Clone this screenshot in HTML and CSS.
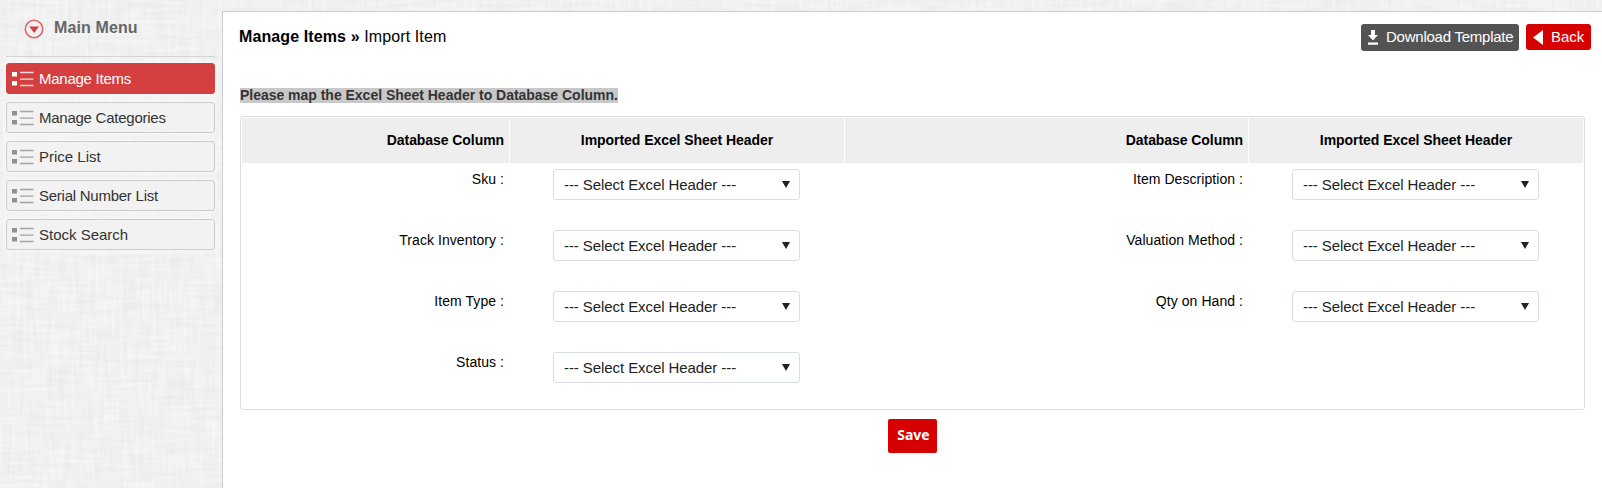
FILE: index.html
```html
<!DOCTYPE html>
<html lang="en">
<head>
<meta charset="utf-8">
<title>Import Item</title>
<link rel="stylesheet" href="styles.css">
</head>
<body>
<svg class="linen">
  <filter id="weft" x="0" y="0" width="100%" height="100%">
    <feTurbulence type="fractalNoise" baseFrequency=".025 .25" numOctaves="2" seed="3"/>
    <feColorMatrix values="0 0 0 0 0  0 0 0 0 0  0 0 0 0 0  .05 0 0 0 -.01"/>
  </filter>
  <filter id="warp" x="0" y="0" width="100%" height="100%">
    <feTurbulence type="fractalNoise" baseFrequency=".25 .025" numOctaves="2" seed="8"/>
    <feColorMatrix values="0 0 0 0 0  0 0 0 0 0  0 0 0 0 0  .05 0 0 0 -.01"/>
  </filter>
  <rect width="100%" height="100%" filter="url(#weft)"/>
  <rect width="100%" height="100%" filter="url(#warp)"/>
</svg>
<svg class="sprite" width="0" height="0">
  <symbol id="list" viewBox="0 0 22 16">
    <path class="squares" d="M0 1h5v4.400H0zM0 10h5v4.400H0z"/>
    <path class="lines" d="M8 1.500h13.500M8 8.200h13.500M8 14.500h13.500"/>
  </symbol>
</svg>
<div class="page">
  <aside class="sidebar">
    <h2 class="menu-title">
      <svg class="menu-icon" viewBox="0 0 20 20"><circle cx="10" cy="10" r="8.700"/><path d="M5.200 7.500h9.800L10.200 14z"/></svg>
      <span>Main Menu</span>
    </h2>
    <nav class="menu">
      <a class="item tight active"><svg><use href="#list"/></svg>Manage Items</a>
      <a class="item tight"><svg><use href="#list"/></svg>Manage Categories</a>
      <a class="item"><svg><use href="#list"/></svg>Price List</a>
      <a class="item tight"><svg><use href="#list"/></svg>Serial Number List</a>
      <a class="item"><svg><use href="#list"/></svg>Stock Search</a>
    </nav>
  </aside>
  <main class="content">
    <header class="topbar">
      <h1 class="crumbs"><b>Manage Items »</b> Import Item</h1>
      <div class="actions">
        <a class="btn download"><svg viewBox="0 0 10 15"><path d="M3 0h4v5h3L5 10.500 0 5h3zM0 12.500h10v2.200H0z"/></svg>Download Template</a>
        <a class="btn back"><svg viewBox="0 0 10 15"><path d="M10 0v15L0 7.500z"/></svg>Back</a>
      </div>
    </header>
    <p class="notice"><span>Please map the Excel Sheet Header to Database Column.</span></p>
    <section class="mapping">
      <div class="row head">
        <div class="name">Database Column</div><div class="pick">Imported Excel Sheet Header</div>
        <div class="name">Database Column</div><div class="pick">Imported Excel Sheet Header</div>
      </div>
      <div class="row">
        <div class="name">Sku :</div><div class="pick"><div class="select">--- Select Excel Header ---<i></i></div></div>
        <div class="name">Item Description :</div><div class="pick"><div class="select">--- Select Excel Header ---<i></i></div></div>
      </div>
      <div class="row">
        <div class="name">Track Inventory :</div><div class="pick"><div class="select">--- Select Excel Header ---<i></i></div></div>
        <div class="name">Valuation Method :</div><div class="pick"><div class="select">--- Select Excel Header ---<i></i></div></div>
      </div>
      <div class="row">
        <div class="name">Item Type :</div><div class="pick"><div class="select">--- Select Excel Header ---<i></i></div></div>
        <div class="name">Qty on Hand :</div><div class="pick"><div class="select">--- Select Excel Header ---<i></i></div></div>
      </div>
      <div class="row">
        <div class="name">Status :</div><div class="pick"><div class="select">--- Select Excel Header ---<i></i></div></div>
      </div>
    </section>
    <div class="footer"><button class="save">Save</button></div>
  </main>
</div>
</body>
</html>
```
FILE: styles.css
```css
* { box-sizing: border-box; }
body {
  margin: 0;
  font-family: "Liberation Sans", Arial, sans-serif;
  color: #000;
  background: #f8f8f8;
}
.linen { position: absolute; inset: 0; z-index: -1; width: 100%; height: 488px; }
.sprite { position: absolute; }
.page { display: grid; grid-template-columns: 222px 1fr; height: 488px; overflow: hidden; }
.sidebar { padding: 0 7px 0 6px; }
.menu-title {
  display: flex; align-items: flex-start; height: 57px; margin: 0 0 6px; padding: 18px 0 0 18px;
  border-bottom: 1px solid #d3d3d3;
  font-size: 16px; line-height: 19px; letter-spacing: .12px; color: #666;
}
.menu-icon { width: 20px; height: 20px; margin: 1px 10px 0 0; fill: none; stroke: #e0686a; stroke-width: 1.6; }
.menu-icon path { fill: #d43f3f; stroke: none; }
.menu { display: flex; flex-direction: column; gap: 8px; }
.item {
  display: flex; align-items: center; height: 31px; padding: 0 0 0 5px;
  border: 1px solid #ccc; border-radius: 3px; background: #f2f2f2;
  box-shadow: 0 0 4px 2px #f8f8f8;
  font-size: 15px; color: #333;
}
.tight { letter-spacing: -.25px; }
.item svg { width: 22px; height: 16px; margin: 1px 5px 0 0; color: #909090; }
.squares { fill: currentColor; }
.lines { stroke: currentColor; stroke-width: 1.3; opacity: .8; }
.item.active { background: #d43f3f; border-color: #d43f3f; color: #fff; }
.item.active svg { color: #fff; }
.content {
  margin-top: 11px; padding: 12px 11px 0 16px; background: #fff;
  border: solid #ccc; border-width: 1px 0 0 1px;
}
.topbar { display: flex; justify-content: space-between; height: 64px; }
.crumbs { margin: 3px 0 0; font-size: 16px; line-height: 19px; font-weight: 400; letter-spacing: .11px; }
.actions { display: flex; align-items: flex-start; gap: 7px; }
.btn { display: flex; align-items: center; color: #fff; border-radius: 3px; font-size: 15px; padding-bottom: 1px; white-space: nowrap; }
.btn svg { width: 10px; height: 15px; fill: #fff; }
.download { width: 158px; height: 27px; padding: 0 0 2px 7px; background: #535353; letter-spacing: -.24px; }
.download svg { margin: 2px 8px 0 0; }
.back { width: 65px; height: 26px; padding-left: 7px; background: #d60000; }
.back svg { margin: 1px 8px 0 0; }
.notice { margin: 0 0 13px 1px; font-size: 14px; line-height: 15px; font-weight: 700; letter-spacing: -.02px; color: #333; }
.notice span { background: #c8c8c8; display: inline-block; vertical-align: top; }
.mapping { width: 1345px; height: 294px; margin-left: 1px; padding: 1px; border: 1px solid #ddd; border-radius: 3px; }
.row { display: grid; grid-template-columns: 267px 334px 403px 334px; column-gap: 1px; height: 61px; font-size: 14px; }
.head { height: 45px; font-weight: 700; }
.head > div { background: #eee; }
.name { padding: 8px 5px 0 0; text-align: right; line-height: 17px; letter-spacing: .06px; }
.pick { padding: 6px 0 0 43px; }
.head .name { padding: 0 5px 0 0; line-height: 45px; letter-spacing: -.07px; }
.head .pick { padding: 0; text-align: center; line-height: 45px; letter-spacing: -.05px; }
.select {
  display: flex; align-items: center; justify-content: space-between; width: 247px; height: 31px;
  padding: 0 9px 0 10px; border: 1px solid #d8dde6; border-radius: 3px; font-size: 15px; letter-spacing: -.08px; color: #222;
}
.select i { border: solid transparent; border-width: 7px 4px 0; border-top-color: #222; margin-top: -1px; }
.footer { display: flex; padding: 9px 0 0 649px; }
.save {
  width: 49px; height: 34px; padding: 0 0 2px 2px; border: 0; border-radius: 2px; background: #d60000;
  font: 700 14px/20px "Noto Sans", sans-serif; color: #fff;
}
```
